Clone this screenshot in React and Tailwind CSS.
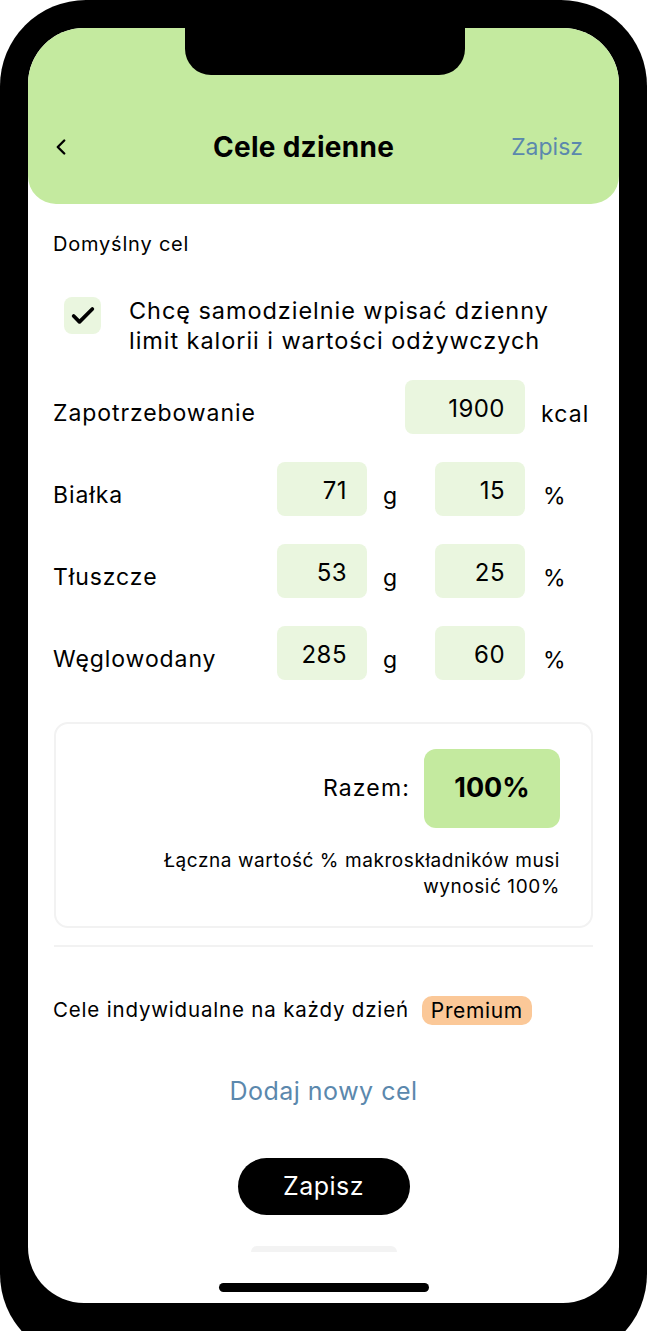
import { Check, ChevronLeft } from "lucide-react";

const font = { fontFamily: "Inter, 'Noto Sans', sans-serif" };

function Field({ value, w = "w-[90px]" }) {
  return (
    <div className={`${w} h-[54px] rounded-[8px] bg-[#eaf6df] flex justify-end items-start pt-[11px] pr-[20px] text-[24px] tracking-[0.02em] text-black`}>
      {value}
    </div>
  );
}

function MacroRow({ label, grams, pct }) {
  return (
    <div className="flex items-center h-[54px]">
      <div className="w-[224px] text-[23px] tracking-[0.04em] pt-[12px]">{label}</div>
      <Field value={grams} />
      <div className="w-[68px] pl-[16px] text-[23px] pt-[14px]">g</div>
      <Field value={pct} />
      <div className="pl-[18px] text-[23px] pt-[14px]">%</div>
    </div>
  );
}

export default function App() {
  return (
    <div className="w-[647px] h-[1331px] bg-white overflow-hidden" style={font}>
      <div className="h-[1360px] bg-black rounded-[86px] p-[28px] pb-[57px] relative">
        <div className="h-full bg-white rounded-t-[56px] rounded-b-[56px] overflow-hidden flex flex-col relative">
          {/* notch */}
          <div className="absolute left-[157px] top-0 w-[280px] h-[47px] bg-black rounded-b-[26px] z-10" />

          <header className="h-[176px] bg-[#c4ea9f] rounded-b-[28px] flex items-end pb-[36px] px-[22px] text-black">
            <div className="w-full flex items-center">
              <ChevronLeft size={26} strokeWidth={2.2} className="shrink-0 -ml-[2px]" />
              <h1 className="flex-1 text-center text-[28px] font-bold tracking-[0.01em] pl-[22px]">Cele dzienne</h1>
              <span className="text-[23px] text-[#5b88ad] pr-[14px]">Zapisz</span>
            </div>
          </header>

          <div className="px-[25px] text-black">
            <p className="mt-[25px] text-[20px] tracking-[0.04em]">Domyślny cel</p>

            <div className="flex mt-[33px] pl-[11px]">
              <div className="w-[37px] h-[37px] mt-[5px] rounded-[8px] bg-[#eaf6df] flex items-center justify-center shrink-0">
                <Check size={28} strokeWidth={3.2} />
              </div>
              <p className="ml-[28px] text-[23.5px] tracking-[0.04em] leading-[30px] mt-[4px]">
                Chcę samodzielnie wpisać dzienny
                <br />
                limit kalorii i wartości odżywczych
              </p>
            </div>

            <div className="flex items-center h-[54px] mt-[24px]">
              <div className="w-[352px] text-[23px] tracking-[0.04em] pt-[12px]">Zapotrzebowanie</div>
              <Field value="1900" w="w-[120px]" />
              <div className="pl-[16px] text-[23px] tracking-[0.05em] pt-[14px]">kcal</div>
            </div>

            <div className="flex flex-col gap-[28px] mt-[28px]">
              <MacroRow label="Białka" grams="71" pct="15" />
              <MacroRow label="Tłuszcze" grams="53" pct="25" />
              <MacroRow label="Węglowodany" grams="285" pct="60" />
            </div>

            <div className="mt-[42px] ml-[1px] w-[539px] h-[206px] rounded-[14px] border-2 border-[#f2f2f2] flex flex-col items-end pr-[31px] pt-[25px]">
              <div className="flex items-center">
                <span className="text-[23px] tracking-[0.05em] mr-[14px]">Razem:</span>
                <div className="w-[136px] h-[79px] rounded-[12px] bg-[#c4ea9f] flex items-center justify-center text-[27px] font-bold">
                  100%
                </div>
              </div>
              <p className="mt-[20px] text-[19px] tracking-[0.03em] leading-[26px] text-right">
                Łączna wartość % makroskładników musi
                <br />
                wynosić 100%
              </p>
            </div>

            <div className="mt-[17px] ml-[1px] w-[539px] h-[2px] bg-[#f2f2f2]" />

            <div className="flex items-center mt-[48px]">
              <span className="text-[20.5px] tracking-[0.04em]">Cele indywidualne na każdy dzień</span>
              <span className="ml-[13px] px-[9px] h-[29px] flex items-center rounded-[10px] bg-[#fbc898] text-[21px] tracking-[0.03em]">Premium</span>
            </div>

            <p className="mt-[47px] text-center text-[25px] tracking-[0.02em] text-[#5b88ad]">Dodaj nowy cel</p>

            <div className="flex justify-center mt-[48px]">
              <button className="w-[172px] h-[57px] rounded-full bg-black text-white text-[25px] tracking-[0.02em]">Zapisz</button>
            </div>

            <div className="mx-auto mt-[31px] w-[146px] h-[6px] rounded-t-full bg-[#f3f3f3]" />
          </div>

          <div className="absolute left-[191px] bottom-[11px] w-[210px] h-[9px] rounded-full bg-black" />
        </div>
      </div>
    </div>
  );
}
